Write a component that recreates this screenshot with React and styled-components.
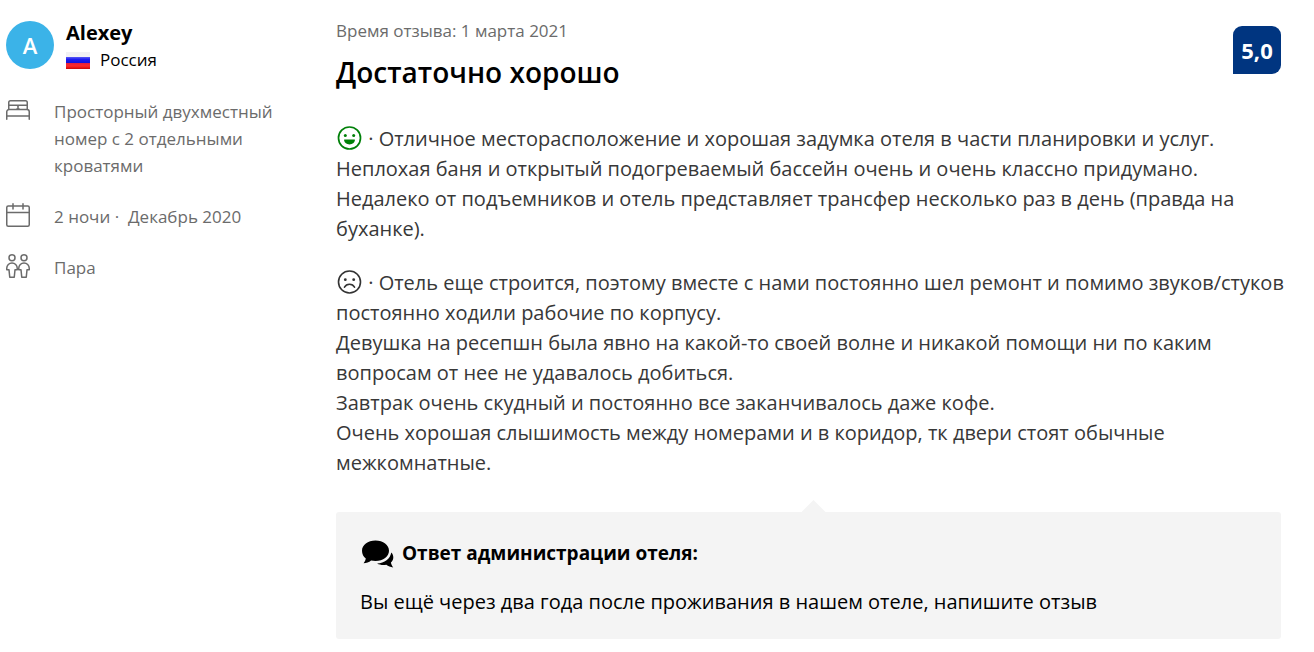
import React from "react";
import styled, { createGlobalStyle } from "styled-components";

const GlobalStyle = createGlobalStyle`
  *, *::before, *::after { box-sizing: border-box; }
  body {
    margin: 0;
    background: #fff;
    color: #000;
    font-family: "Open Sans", "Noto Sans", sans-serif;
    font-size: 20px;
    line-height: 30px;
  }
  h2, h3, p, ul { margin: 0; padding: 0; }
`;

const Review = styled.article`
  display: grid;
  grid-template-columns: 282px minmax(0, 1fr);
  column-gap: 48px;
  padding: 18px 33px 14px 6px;
`;

const Guest = styled.aside`
  display: flex;
  flex-direction: column;
  gap: 26px;
`;

const Author = styled.div`
  display: flex;
  align-items: center;
  gap: 12px;
`;

const Avatar = styled.div`
  display: grid;
  place-items: center;
  width: 48px;
  height: 48px;
  border-radius: 50%;
  background: #3bb3e8;
  color: #fff;
  font-size: 22px;
  font-weight: 600;
`;

const Name = styled.div`
  font-size: 20px;
  font-weight: 700;
  line-height: 30px;
`;

const Country = styled.div`
  display: flex;
  align-items: center;
  gap: 10px;
  font-size: 17px;
  line-height: 24px;
`;

const Facts = styled.ul`
  display: flex;
  flex-direction: column;
  gap: 24px;
  list-style: none;
  color: #6b6b6b;
`;

const Fact = styled.li`
  display: flex;
  align-items: flex-start;
  gap: 24px;
  padding-right: 4px;
  font-size: 17px;
  line-height: 27px;
  white-space: pre-wrap;

  svg { flex: none; }
`;

const Content = styled.div`
  min-width: 0;
`;

const Header = styled.header`
  display: flex;
  justify-content: space-between;
  align-items: flex-start;
`;

const ReviewDate = styled.p`
  color: #6b6b6b;
  font-size: 17px;
  line-height: 26px;
`;

const Title = styled.h2`
  margin-top: 10px;
  font-size: 28px;
  font-weight: 600;
  line-height: 36px;
`;

const Score = styled.div`
  display: grid;
  place-items: center;
  width: 48px;
  height: 48px;
  margin-top: 8px;
  border-radius: 9px 9px 9px 0;
  background: #003580;
  color: #fff;
  font-size: 22px;
  font-weight: 700;
`;

const Comment = styled.p`
  margin-top: ${(p) => (p.$first ? 34 : 24)}px;
  margin-right: -12px;
  color: #383838;
  white-space: pre-line;

  svg { vertical-align: -4px; }
`;

const Reply = styled.section`
  position: relative;
  margin-top: 34px;
  padding: 24px 24px 22px;
  border-radius: 3px;
  background: #f4f4f4;

  &::before {
    content: "";
    position: absolute;
    bottom: 100%;
    left: calc(50% - 7px);
    width: 24px;
    height: 12px;
    background: inherit;
    clip-path: polygon(50% 0, 100% 100%, 0 100%);
  }
`;

const ReplyTitle = styled.h3`
  display: flex;
  align-items: center;
  gap: 8px;
  font-size: 19px;
  font-weight: 700;
  line-height: 34px;
`;

const ReplyText = styled.p`
  margin-top: 17px;
`;

const Flag = () => (
  <svg width="24" height="17" viewBox="0 0 24 17" aria-hidden="true">
    <defs>
      <linearGradient id="blue" x1="0" y1="0" x2="0" y2="1">
        <stop offset="0" stopColor="#5a5af5" />
        <stop offset="0.4" stopColor="#1c1cf0" />
        <stop offset="1" stopColor="#1010d8" />
      </linearGradient>
      <linearGradient id="red" x1="0" y1="0" x2="0" y2="1">
        <stop offset="0" stopColor="#e02040" />
        <stop offset="0.5" stopColor="#ff2828" />
        <stop offset="1" stopColor="#c80808" />
      </linearGradient>
    </defs>
    <rect width="24" height="17" fill="#f1f1f4" />
    <rect y="5" width="24" height="6" fill="url(#blue)" />
    <rect y="11" width="24" height="6" fill="url(#red)" />
  </svg>
);

const lineIcon = {
  width: 24,
  height: 24,
  viewBox: "0 0 24 24",
  fill: "none",
  stroke: "currentColor",
  strokeWidth: 1.5,
  strokeLinecap: "round",
  strokeLinejoin: "round",
  "aria-hidden": true,
};

const BedIcon = () => (
  <svg {...lineIcon}>
    <path d="M.75 21.250v-7.500a2.250 2.250 0 0 1 2.250-2.250h18a2.250 2.250 0 0 1 2.250 2.250v7.500M.75 18h22.500M2.750 11.500V4.500a1.750 1.750 0 0 1 1.750-1.750h15a1.750 1.750 0 0 1 1.750 1.750v7M2.750 7.250h18.500M12 8.500v1.250a1.250 1.250 0 0 1-1.250 1.250M12 8.500v1.250a1.250 1.250 0 0 0 1.250 1.250M12 8.500a1.250 1.250 0 0 0-1.250-1.250M12 8.500a1.250 1.250 0 0 1 1.250-1.250" />
  </svg>
);

const CalendarIcon = () => (
  <svg {...lineIcon}>
    <rect x="0.750" y="3" width="22.500" height="20.250" rx="1.500" />
    <path d="M.75 9.500h22.500M7 6V.75M17 6V.75" />
  </svg>
);

const CoupleIcon = () => (
  <svg {...lineIcon}>
    <circle cx="6" cy="3.750" r="3" />
    <circle cx="18" cy="3.750" r="3" />
    <path d="M11.250 14.250a5.250 5.250 0 1 0-10.500 0v1.500H3l.75 7.500h4.500L9 15.750h2.250zM12.750 15.750v-1.500a5.250 5.250 0 1 1 10.500 0v1.500H21l-.75 7.500h-4.500L15 15.750z" />
  </svg>
);

const HappyIcon = () => (
  <svg width="27" height="24" viewBox="-1.500 0 27 24" fill="none" role="img" aria-label="Понравилось">
    <circle cx="12" cy="12" r="11" stroke="#008009" strokeWidth="1.700" />
    <circle cx="7.800" cy="9.500" r="1.500" fill="#008009" />
    <circle cx="16.200" cy="9.500" r="1.500" fill="#008009" />
    <path d="M7 13.500h10a.5.5 0 0 1 .5.6 5.600 5.300 0 0 1-11 0 .5.5 0 0 1 .5-.6z" fill="#008009" />
  </svg>
);

const SadIcon = () => (
  <svg width="27" height="24" viewBox="-1.500 0 27 24" fill="none" role="img" aria-label="Не понравилось">
    <circle cx="12" cy="12" r="11" stroke="#333" strokeWidth="1.600" />
    <circle cx="7.800" cy="9.700" r="1.400" fill="#333" />
    <circle cx="16.200" cy="9.700" r="1.400" fill="#333" />
    <path d="M7 17.200c2-4 8-4 10 0" stroke="#333" strokeWidth="1.600" strokeLinecap="round" />
  </svg>
);

const CommentsIcon = () => (
  <svg width="34" height="32" viewBox="-1 -3 34 32" aria-hidden="true">
    <path d="M14.500 0.500C22.200 0.500 28 5 28 10.700S22.200 21 14.500 21c-1.600 0-3-.2-4.400-.5C8 22.300 5.300 23.200 2.600 23.300c1.200-1.500 1.900-3 2.200-4.700C2.400 16.700 1 13.900 1 10.700 1 5 6.800 0.500 14.500 0.500z" />
    <path d="M30.300 12.500c1.300 1.400 2 3.100 2 4.900 0 2-.9 3.800-2.400 5.200.3 1.500 1.100 3.400 2.300 4.800-2.700-.3-5-1.200-6.900-2.700-3.200.6-6.700.2-9.200-1.200 7.500-.2 13-4.600 14.200-11z" />
  </svg>
);

const facts = [
  { Icon: BedIcon, text: "Просторный двухместный номер с 2 отдельными кроватями" },
  { Icon: CalendarIcon, text: "2 ночи ·  Декабрь 2020" },
  { Icon: CoupleIcon, text: "Пара" },
];

const liked =
  "Отличное месторасположение и хорошая задумка отеля в части планировки и услуг. Неплохая баня и открытый подогреваемый бассейн очень и очень классно придумано.\nНедалеко от подъемников и отель представляет трансфер несколько раз в день (правда на буханке).";

const disliked =
  "Отель еще строится, поэтому вместе с нами постоянно шел ремонт и помимо звуков/стуков постоянно ходили рабочие по корпусу.\nДевушка на ресепшн была явно на какой-то своей волне и никакой помощи ни по каким вопросам от нее не удавалось добиться.\nЗавтрак очень скудный и постоянно все заканчивалось даже кофе.\nОчень хорошая слышимость между номерами и в коридор, тк двери стоят обычные межкомнатные.";

export default function App() {
  return (
    <>
      <GlobalStyle />
      <Review>
        <Guest>
          <Author>
            <Avatar>A</Avatar>
            <div>
              <Name>Alexey</Name>
              <Country>
                <Flag />
                Россия
              </Country>
            </div>
          </Author>
          <Facts>
            {facts.map(({ Icon, text }) => (
              <Fact key={text}>
                <Icon />
                <span>{text}</span>
              </Fact>
            ))}
          </Facts>
        </Guest>
        <Content>
          <Header>
            <div>
              <ReviewDate>Время отзыва: 1 марта 2021</ReviewDate>
              <Title>Достаточно хорошо</Title>
            </div>
            <Score>5,0</Score>
          </Header>
          <Comment $first>
            <HappyIcon />
            {` · ${liked}`}
          </Comment>
          <Comment>
            <SadIcon />
            {` · ${disliked}`}
          </Comment>
          <Reply>
            <ReplyTitle>
              <CommentsIcon />
              Ответ администрации отеля:
            </ReplyTitle>
            <ReplyText>Вы ещё через два года после проживания в нашем отеле, напишите отзыв</ReplyText>
          </Reply>
        </Content>
      </Review>
    </>
  );
}
